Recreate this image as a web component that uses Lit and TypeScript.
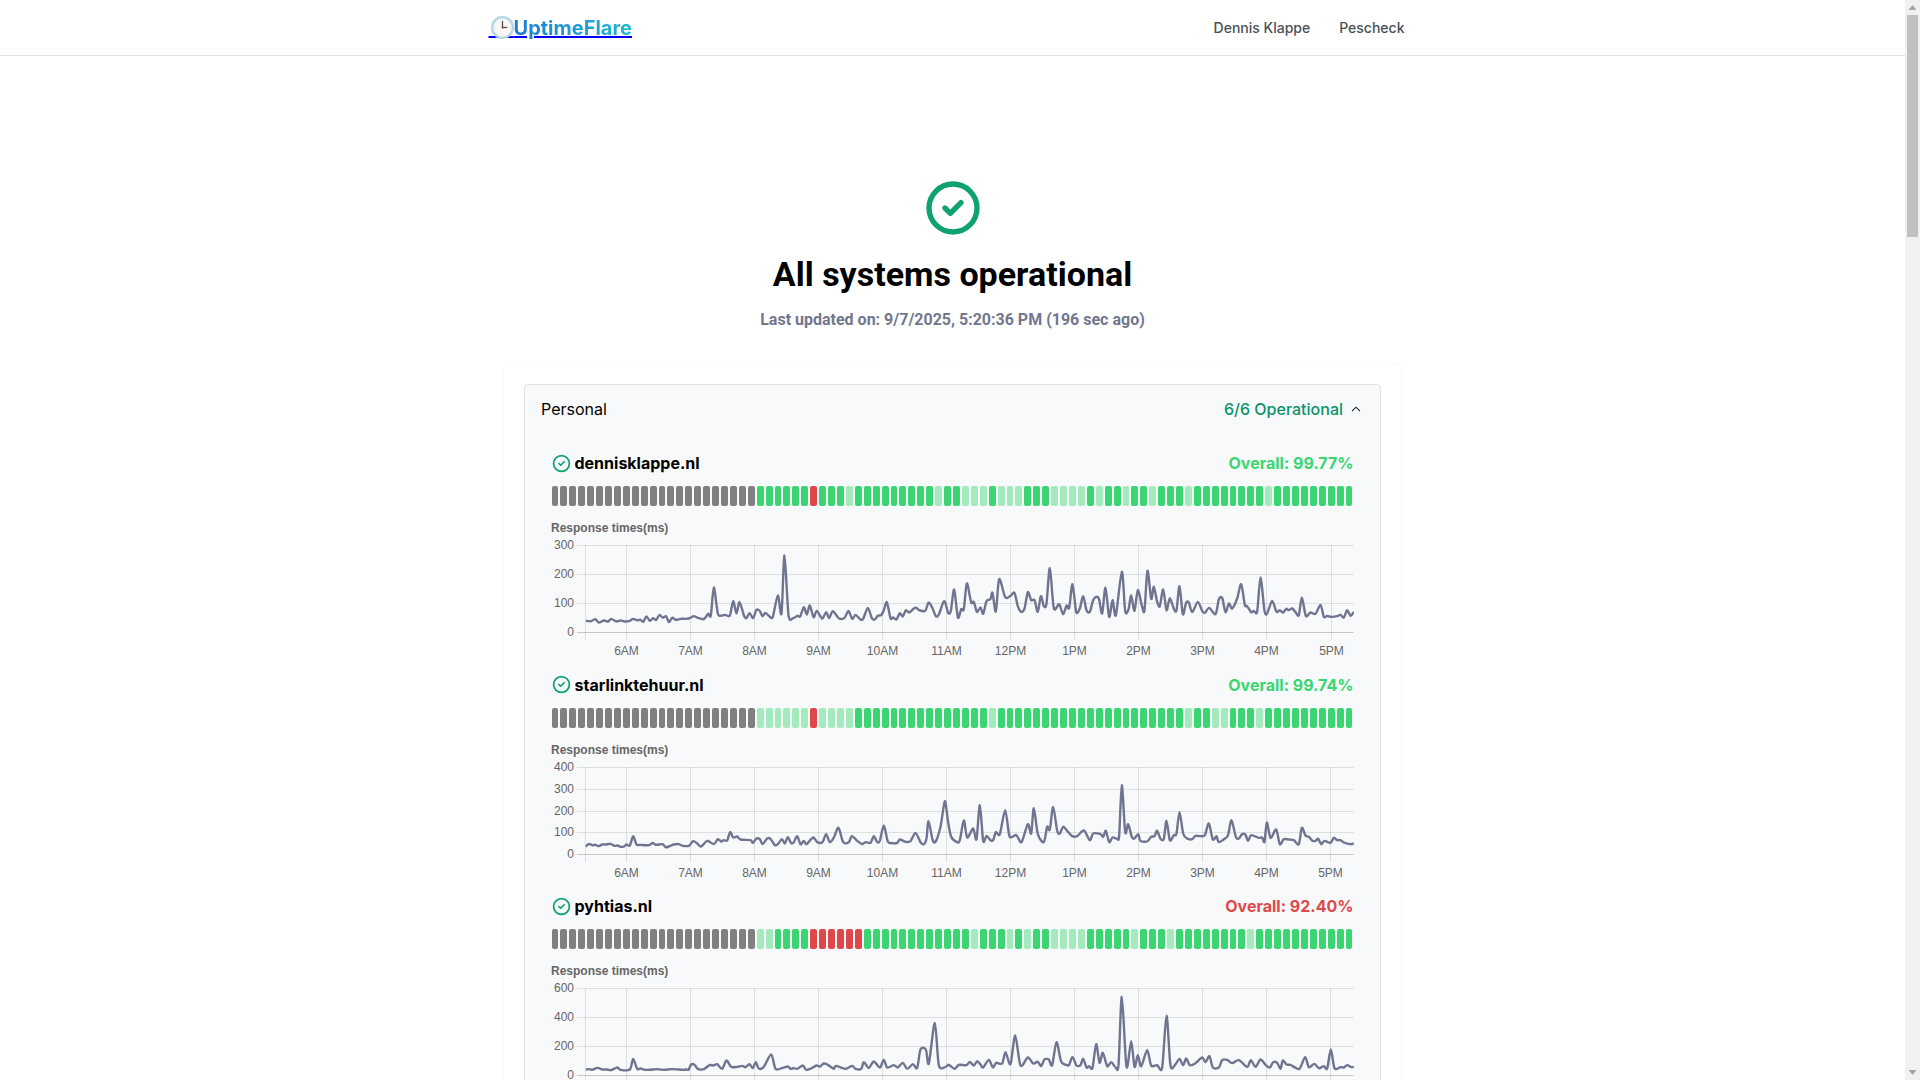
import { LitElement, html, css, svg } from "lit";
import { customElement } from "lit/decorators.js";

type Cell = "g" | "D" | "L" | "R";

/** Builds a 90-cell uptime strip: 23 "no data" cells then green, with overrides by index. */
function strip(light: number[], red: number[]): Cell[] {
  const out: Cell[] = [];
  for (let i = 0; i < 90; i++) {
    if (i < 23) out.push("g");
    else if (red.includes(i)) out.push("R");
    else if (light.includes(i)) out.push("L");
    else out.push("D");
  }
  return out;
}

const HOURS = ["6AM", "7AM", "8AM", "9AM", "10AM", "11AM", "12PM", "1PM", "2PM", "3PM", "4PM", "5PM"];
const LEFT_BASE = 540;
const RIGHT_BASE = 960;
const ORIGIN_X = 551;
const GRID_TOP = 25;
const GRID_BOTTOM = 112;

interface Monitor {
  name: string;
  overall: string;
  bad: boolean;
  cells: Cell[];
  ticks: string[];
  lastHourX: number;
  topZ: number;
  left: number[];
  right: number[];
}

const MONITORS: Monitor[] = [
  {
    name: "dennisklappe.nl",
    overall: "Overall: 99.77%",
    bad: false,
    cells: strip([33, 43, 46, 47, 48, 50, 51, 52, 56, 57, 58, 59, 61, 64, 67, 71, 80], [29]),
    ticks: ["0", "100", "200", "300"],
    lastHourX: 1331,
    topZ: 76,
    left: [136,302,152,303,164,297,175,307,190,301,203,304,212,296,228,304,240,301,252,304,268,302,278,296,290,300,300,299,308,305,318,289,328,302,338,294,347,299,357,284,367,293,377,288,385,306,395,293,406,299,420,296,436,296,448,294,460,288,472,293,490,297,503,281,511,286,520,202,532,280,545,286,555,284,568,286,578,243,588,280,597,245,610,285,618,294,627,279,638,294,647,270,657,271,666,288,675,278,688,290,697,290,712,226,723,280,732,106,744,285,758,294,770,287,779,289,790,261,799,283,808,256,819,291,829,272,845,295,857,276,866,294,877,273,895,294,912,293,924,272,935,296,945,284,960,298,968,296,982,263,994,294,1003,298,1012,287,1022,285,1030,270,1039,246,1050,294,1058,292,1068,298,1078,279,1087,289,1096,270,1106,277,1120,265,1128,263,1136,270,1154,272,1164,247,1175,262,1186,288,1195,283,1208,247,1214,246,1223,278,1231,272,1241,208,1252,292,1262,267,1270,267,1279,190,1292,247,1300,245,1309,275,1320,262],
    right: [68,281,78,243,90,237,96,218,106,274,116,177,134,231,150,227,162,218,172,258,182,275,192,265,202,216,212,240,222,240,232,275,241,228,250,258,258,250,268,144,280,264,296,252,308,282,318,256,326,263,336,192,347,275,358,265,368,228,378,270,388,275,398,240,408,230,416,238,425,280,435,203,446,290,456,240,466,285,484,155,494,272,504,268,512,226,522,272,532,210,545,260,552,270,561,152,572,236,580,200,590,245,598,258,608,208,618,270,628,234,640,266,648,270,657,198,667,282,677,247,685,247,695,276,712,245,725,272,733,278,746,263,765,282,775,238,785,233,795,276,805,250,815,265,830,235,842,192,853,254,860,258,872,276,880,272,890,274,900,172,912,272,920,280,935,242,948,275,958,270,968,277,977,266,985,270,995,265,1005,276,1015,285,1024,232,1036,287,1050,277,1065,281,1080,254,1090,290,1100,287,1112,290,1130,288,1140,284,1150,292,1160,270,1170,287,1180,276],
  },
  {
    name: "starlinktehuur.nl",
    overall: "Overall: 99.74%",
    bad: false,
    cells: strip([23, 24, 25, 26, 27, 28, 30, 31, 32, 33, 49, 71, 74, 75, 79], [29]),
    ticks: ["0", "100", "200", "300", "400"],
    lastHourX: 1330,
    topZ: 82,
    left: [136,319,145,311,155,315,165,314,175,318,185,313,195,313,210,311,222,317,232,316,240,320,250,319,258,313,268,316,278,288,288,313,300,314,326,315,336,308,346,314,366,312,375,321,385,319,400,313,414,312,428,317,445,317,458,303,470,310,482,319,500,302,520,312,532,297,542,304,550,300,560,301,569,276,578,292,590,289,600,298,630,300,637,308,648,295,658,297,666,312,680,295,690,296,703,315,712,312,724,297,733,310,742,291,752,309,760,306,770,288,780,312,790,302,798,312,818,292,830,306,846,306,857,282,868,306,880,292,894,263,908,306,925,306,934,288,950,302,965,312,975,306,990,308,1000,288,1010,306,1018,302,1030,256,1042,304,1055,309,1070,308,1078,298,1095,305,1110,303,1125,278,1140,306,1150,312,1158,295,1164,243,1176,298,1185,305,1200,260,1213,183,1222,240,1232,290,1250,306,1258,300,1270,241,1280,292,1298,265,1308,297,1318,195],
    right: [68,302,78,287,90,300,98,300,106,276,118,282,134,210,146,285,155,290,168,285,183,306,202,252,212,280,220,204,232,282,250,306,260,260,268,268,278,200,290,272,298,280,308,260,320,272,335,288,350,288,370,271,388,300,398,280,420,282,428,290,436,272,446,306,456,292,470,296,476,286,484,135,494,276,503,252,514,290,522,295,533,282,540,302,560,304,572,290,582,288,590,272,600,296,610,296,618,242,628,300,640,285,648,280,657,216,668,280,680,295,695,297,705,287,720,288,733,285,745,250,757,298,768,288,775,306,795,294,803,284,813,240,826,290,835,295,845,282,855,284,863,302,872,285,895,293,905,292,912,305,919,247,930,293,947,268,958,312,970,297,985,298,1000,300,1015,312,1024,263,1035,286,1045,290,1056,302,1065,302,1073,296,1082,312,1092,302,1110,308,1120,293,1130,300,1140,300,1150,307,1170,312,1180,310],
  },
  {
    name: "pyhtias.nl",
    overall: "Overall: 92.40%",
    bad: true,
    cells: strip([23, 24, 47, 51, 53, 56, 57, 58, 59, 65, 69, 78], [29, 30, 31, 32, 33, 34]),
    ticks: ["0", "200", "400", "600"],
    lastHourX: 1330,
    topZ: 85,
    left: [136,328,146,327,155,329,172,323,185,328,200,328,212,330,230,322,240,329,268,328,278,296,290,326,300,325,315,329,340,328,346,327,370,329,395,327,430,329,436,327,444,329,452,313,462,314,472,326,490,327,507,315,520,316,530,312,545,326,558,301,572,320,590,320,605,317,615,321,627,312,637,324,646,306,655,325,670,320,692,283,705,326,724,324,742,319,750,326,760,324,770,326,787,316,797,329,812,325,828,316,838,319,850,310,862,314,880,326,886,317,915,326,935,317,945,326,962,326,970,306,985,323,1000,304,1018,322,1030,299,1040,322,1060,315,1072,322,1087,308,1100,326,1117,312,1130,323,1140,268,1156,268,1165,310,1183,188,1195,315,1215,320,1225,314,1242,326,1255,314,1278,315,1288,305,1300,316,1310,303,1320,313],
    right: [68,322,85,299,97,322,107,308,125,310,135,276,150,312,164,226,180,316,202,292,218,310,232,305,242,318,252,298,265,298,275,315,288,246,302,304,320,315,326,314,336,290,348,316,360,315,368,296,378,322,386,318,396,323,407,252,417,308,427,278,440,318,452,306,464,320,474,315,484,110,498,320,512,243,522,320,532,285,542,318,560,270,572,316,590,315,605,322,618,167,630,316,645,312,657,296,668,315,677,295,688,315,705,309,725,292,735,306,747,288,757,322,775,322,785,300,800,299,815,309,835,300,860,320,871,300,885,320,900,298,915,314,928,322,938,306,950,308,960,326,967,301,978,313,990,314,1000,320,1017,326,1034,291,1045,321,1062,311,1075,324,1090,318,1100,325,1111,268,1122,324,1140,321,1150,322,1160,315,1170,320,1180,321],
  },
];

/** Chart.js-like tension: cubic segments whose handles follow the neighbouring points. */
function linePath(m: Monitor): string {
  const pts: [number, number][] = [];
  const add = (arr: number[], base: number) => {
    for (let i = 0; i < arr.length; i += 2) {
      pts.push([base + arr[i] / 3 - ORIGIN_X + 0.5, GRID_TOP + (arr[i + 1] - m.topZ) / 3 + 0.5]);
    }
  };
  add(m.left, LEFT_BASE);
  add(m.right, RIGHT_BASE);
  const k = 0.14;
  let d = `M${pts[0][0].toFixed(2)} ${pts[0][1].toFixed(2)}`;
  for (let i = 0; i < pts.length - 1; i++) {
    const p0 = pts[Math.max(0, i - 1)];
    const p1 = pts[i];
    const p2 = pts[i + 1];
    const p3 = pts[Math.min(pts.length - 1, i + 2)];
    const c1x = p1[0] + (p2[0] - p0[0]) * k;
    const c1y = p1[1] + (p2[1] - p0[1]) * k;
    const c2x = p2[0] - (p3[0] - p1[0]) * k;
    const c2y = p2[1] - (p3[1] - p1[1]) * k;
    d += `C${c1x.toFixed(2)} ${c1y.toFixed(2)} ${c2x.toFixed(2)} ${c2y.toFixed(2)} ${p2[0].toFixed(2)} ${p2[1].toFixed(2)}`;
  }
  return d;
}

@customElement("app-root")
export class AppRoot extends LitElement {
  static styles = css`
    :host {
      display: flex;
      height: 100vh;
      overflow: hidden;
      background: #fff;
      font-family: Inter, "Liberation Sans", sans-serif;
      color: #000;
    }
    .page { flex: 1; min-width: 0; overflow: hidden; }

    header { height: 55px; border-bottom: 1px solid #dee2e6; }
    .bar {
      max-width: 928px;
      height: 100%;
      margin: 0 auto;
      display: flex;
      align-items: center;
      justify-content: space-between;
    }
    .logo {
      color: #0000ee;
      font-size: 20px;
      font-weight: 700;
      line-height: 30px;
      text-decoration: underline;
    }
    .clock-slot { position: relative; font-weight: 400; letter-spacing: 19.4px; }
    .clock { position: absolute; left: 2px; top: 0; width: 23px; height: 23px; }
    .brand {
      background: linear-gradient(90deg, #1c7ed6, #22b8cf);
      -webkit-background-clip: text;
      background-clip: text;
      -webkit-text-fill-color: transparent;
    }
    nav { display: flex; gap: 5px; }
    nav a {
      padding: 8px 12px;
      color: #495057;
      font-size: 14px;
      font-weight: 500;
      line-height: 14px;
      text-decoration: none;
    }

    .hero { margin-top: 120px; display: flex; flex-direction: column; align-items: center; }
    .hero-icon { display: block; width: 64px; height: 64px; color: #0ea271; }
    h1 {
      margin: 12px 0 0;
      font-family: Roboto, sans-serif;
      font-size: 34px;
      font-weight: 700;
      line-height: 45px;
    }
    .updated {
      margin: 10.5px 0 0;
      font-family: Roboto, sans-serif;
      font-size: 16px;
      font-weight: 700;
      line-height: 24px;
      color: #71778f;
    }

    .wrap {
      width: 857px;
      margin: 31.5px auto 0;
      padding: 20px;
      border: 1px solid #f9f9f9;
      border-radius: 6px;
    }
    .group {
      background: #f8f9fa;
      border: 1px solid #dee2e6;
      border-radius: 4px;
    }
    .group-head {
      height: 48px;
      padding: 0 16px;
      display: flex;
      align-items: center;
      justify-content: space-between;
      font-size: 16px;
    }
    .group-status { display: flex; align-items: center; gap: 8px; color: #0b9269; font-weight: 500; }
    .chev { display: block; width: 10px; height: 6px; color: #222; margin-right: 3px; }
    .monitors { padding: 18px 26px 0 25.5px; }

    .monitor { height: 221.5px; }
    .row { display: flex; justify-content: space-between; align-items: center; height: 24px; margin-right: 0.5px; }
    .name { display: flex; align-items: center; gap: 3px; font-size: 16px; font-weight: 700; line-height: 24px; }
    .name svg { display: block; width: 21px; height: 21px; color: #0ea271; }
    .overall { font-size: 16px; font-weight: 700; color: #3bd671; line-height: 24px; }
    .overall.bad { color: #df484a; }

    .cells { display: flex; margin-top: 11px; height: 20px; }
    .cell { flex: 1; margin: 0 1px; border-radius: 2px; }
    .cell.g { background: #808080; }
    .cell.D { background: #3bd671; }
    .cell.L { background: #3bd671; opacity: 0.45; }
    .cell.R { background: #df484a; }

    .chart { display: block; margin: 14px 0 0 0.5px; width: 803px; height: 150px; }
    .chart text { font-family: "Liberation Sans", Arial, sans-serif; font-size: 12px; fill: #666; }
    .chart .title { font-weight: 700; }
    .chart .grid { stroke: #000; stroke-opacity: 0.1; stroke-width: 1; }
    .chart .axis { stroke: #000; stroke-opacity: 0.2; stroke-width: 1; }
    .chart .series { fill: none; stroke: #6f7590; stroke-width: 2.4; stroke-linejoin: round; }

    .scrollbar {
      flex: none;
      width: 15px;
      background: #f1f1f1;
      display: flex;
      flex-direction: column;
      justify-content: space-between;
    }
    .sb-arrow { display: block; width: 15px; height: 15px; color: #a3a3a3; }
    .sb-track { flex: 1; padding: 0 2px; }
    .sb-thumb { height: 222px; background: #c1c1c1; }
  `;

  private circleCheck(cls: string, sw: number) {
    return html`<svg class=${cls} viewBox="0 0 24 24" fill="none" stroke="currentColor" stroke-width=${sw} stroke-linecap="round" stroke-linejoin="round">
      <path d="M3 12a9 9 0 1 0 18 0a9 9 0 0 0 -18 0"></path>
      <path d="M9 12l2 2l4 -4"></path>
    </svg>`;
  }

  private chart(m: Monitor) {
    const hourX = (i: number) => (i === 11 ? m.lastHourX : 626 + i * 64) - ORIGIN_X + 0.5;
    const axisX = 585 - ORIGIN_X + 0.5;
    const step = (GRID_BOTTOM - GRID_TOP) / (m.ticks.length - 1);
    return html`<svg class="chart" viewBox="0 0 803 150">
      <text class="title" x="0" y="12">Response times(ms)</text>
      ${m.ticks.map((t, i) => {
        const y = Math.round(GRID_BOTTOM - i * step) + 0.5;
        return svg`
          <line class=${i === 0 ? "axis" : "grid"} x1="26" x2="802.5" y1=${y} y2=${y}></line>
          <text x="23" y=${y + 3.5} text-anchor="end">${t}</text>`;
      })}
      <line class="grid" x1=${axisX} x2=${axisX} y1=${GRID_TOP} y2=${GRID_BOTTOM + 8}></line>
      ${HOURS.map((h, i) => svg`
        <line class="grid" x1=${hourX(i)} x2=${hourX(i)} y1=${GRID_TOP} y2=${GRID_BOTTOM + 8}></line>
        <text x=${hourX(i)} y=${GRID_BOTTOM + 22.5} text-anchor="middle">${h}</text>`)}
      <path class="series" d=${linePath(m)}></path>
    </svg>`;
  }

  render() {
    return html`
      <div class="page">
        <header>
          <div class="bar">
            <a class="logo" href="#"><span class="clock-slot">&nbsp;<svg class="clock" viewBox="0 0 24 24" aria-label="clock">
                <circle cx="12" cy="12" r="12" fill="#b4d5e3"></circle>
                <circle cx="12" cy="12" r="9.6" fill="#f7f7f5"></circle>
                <path d="M12 3.6v1M12 19.4v1M3.6 12h1M19.4 12h1" stroke="#c9c9c9" stroke-width="0.8"></path>
                <path d="M12 12V5.2" stroke="#4a4a4a" stroke-width="1.3"></path>
                <path d="M12 12h5" stroke="#4a4a4a" stroke-width="1.3"></path>
                <circle cx="12" cy="12" r="1.1" fill="#8c3a2c"></circle>
              </svg></span><span class="brand">UptimeFlare</span></a>
            <nav>
              <a href="#">Dennis Klappe</a>
              <a href="#">Pescheck</a>
            </nav>
          </div>
        </header>

        <section class="hero">
          ${this.circleCheck("hero-icon", 2)}
          <h1>All systems operational</h1>
          <p class="updated">Last updated on: 9/7/2025, 5:20:36 PM (196 sec ago)</p>
        </section>

        <div class="wrap">
          <div class="group">
            <div class="group-head">
              <span>Personal</span>
              <span class="group-status">6/6 Operational
                <svg class="chev" viewBox="0 0 10 6" fill="none" stroke="currentColor" stroke-width="1.1"><path d="M1 5.2L5 1.2l4 4"></path></svg>
              </span>
            </div>
            <div class="monitors">
              ${MONITORS.map(
                (m) => html`<div class="monitor">
                  <div class="row">
                    <div class="name">${this.circleCheck("", 2)}<span>${m.name}</span></div>
                    <div class="overall ${m.bad ? "bad" : ""}">${m.overall}</div>
                  </div>
                  <div class="cells">${m.cells.map((c) => html`<div class="cell ${c}"></div>`)}</div>
                  ${this.chart(m)}
                </div>`
              )}
            </div>
          </div>
        </div>
      </div>
      <div class="scrollbar" aria-hidden="true">
        <svg class="sb-arrow" viewBox="0 0 15 15"><path d="M7.5 5L3.5 10h8z" fill="currentColor"></path></svg>
        <div class="sb-track"><div class="sb-thumb"></div></div>
        <svg class="sb-arrow" viewBox="0 0 15 15"><path d="M7.5 10L3.5 5h8z" fill="currentColor"></path></svg>
      </div>
    `;
  }
}
